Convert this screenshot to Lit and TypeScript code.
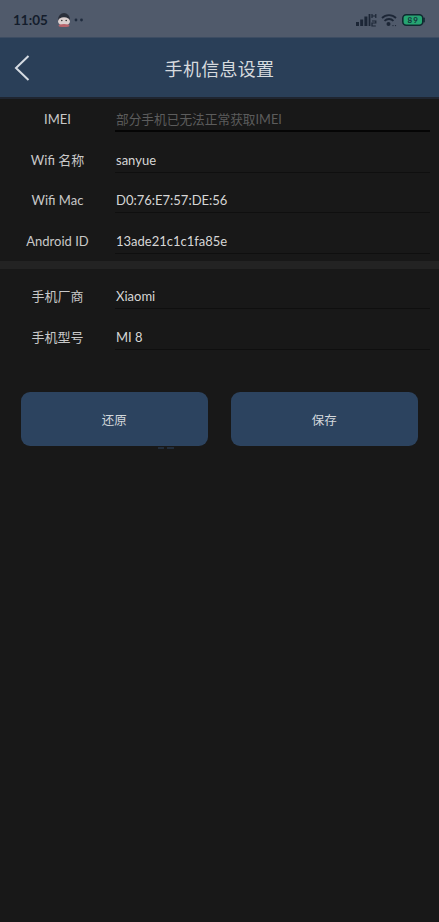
import { LitElement, html, css } from "lit";
import { customElement } from "lit/decorators.js";

const group1 = [
  { label: "IMEI", value: "部分手机已无法正常获取IMEI", hint: true },
  { label: "Wifi 名称", value: "sanyue" },
  { label: "Wifi Mac", value: "D0:76:E7:57:DE:56" },
  { label: "Android ID", value: "13ade21c1c1fa85e" },
];
const group2 = [
  { label: "手机厂商", value: "Xiaomi" },
  { label: "手机型号", value: "MI 8" },
];

@customElement("app-root")
export class AppRoot extends LitElement {
  static styles = css`
    :host {
      display: block;
      width: 439px;
      height: 922px;
      overflow: hidden;
      background: #181818;
      font-family: Lato, "Noto Sans CJK SC", sans-serif;
      color: #d2d2d2;
    }
    .status {
      height: 37px;
      box-sizing: border-box;
      background: #505a6b;
      display: flex;
      align-items: center;
      padding: 2px 14px 0 13px;
      color: #141d2b;
    }
    .time { font-size: 13.5px; font-weight: 700; margin-right: 8px; }
    .dots { margin-left: 2px; }
    .spacer { flex: 1; }
    .status-icons { display: flex; align-items: center; gap: 4px; }
    .battery-text {
      font-size: 8px; fill: #14323a; font-weight: 700; letter-spacing: 1px;
    }
    .header {
      height: 62px;
      box-sizing: border-box;
      background: #2a3f58;
      border-top: 1px solid #3c4c62;
      border-bottom: 2px solid #1f2530;
      display: flex;
      align-items: center;
      position: relative;
    }
    .back { margin-left: 14px; display: block; }
    .title {
      position: absolute;
      left: 0;
      right: 0;
      text-align: center;
      font-size: 18px;
      color: #d6dade;
      letter-spacing: 0.3px;
    }
    .row {
      display: flex;
      height: 40.5px;
      box-sizing: border-box;
      padding-right: 9px;
    }
    .label {
      width: 115px;
      text-align: center;
      font-size: 13px;
      line-height: 41px;
      color: #c8c8c8;
    }
    .value {
      flex: 1;
      font-size: 13px;
      line-height: 41px;
      height: 32px;
      padding-left: 1px;
      border-bottom: 1px solid #0f0f0f;
      color: #d6d6d6;
      white-space: nowrap;
    }
    .value.hint {
      color: #5c5c5c;
      font-size: 12.7px;
      border-bottom: 2px solid #050505;
      height: 31px;
    }
    .divider { height: 8px; background: #232323; }
    .group-b { padding-top: 6.5px; }
    .group-b .row { height: 41.5px; }
    .actions {
      display: flex;
      justify-content: space-between;
      padding: 0 21px 0 20.5px;
      margin-top: 33.5px;
    }
    .btn {
      width: 187.5px;
      height: 54px;
      border: none;
      padding: 0;
      border-radius: 9px;
      background: #2c435f;
      color: #d4d8dc;
      font: inherit;
      font-size: 12.5px;
    }
    .ghost {
      width: 18px;
      height: 4px;
      margin: 1px 0 0 157px;
      display: block;
    }
  `;

  private row(r: { label: string; value: string; hint?: boolean }) {
    return html`<div class="row">
      <div class="label">${r.label}</div>
      <div class="value ${r.hint ? "hint" : ""}">${r.value}</div>
    </div>`;
  }

  render() {
    return html`
      <div class="status">
        <span class="time">11:05</span>
        <svg width="16" height="16" viewBox="0 0 16 16">
          <ellipse cx="8" cy="7.5" rx="6" ry="6.5" fill="#2a2f3a" />
          <ellipse cx="8" cy="9.5" rx="6" ry="4.2" fill="#dcd0cf" />
          <ellipse cx="8" cy="13.5" rx="5.5" ry="1.6" fill="#b8636b" />
          <circle cx="5.8" cy="8.5" r="0.8" fill="#333" />
          <circle cx="10.2" cy="8.5" r="0.8" fill="#333" />
        </svg>
        <svg class="dots" width="10" height="4" viewBox="0 0 10 4">
          <circle cx="2" cy="2" r="1.4" fill="#1f2b3d" />
          <circle cx="7.5" cy="2" r="1.4" fill="#1f2b3d" />
        </svg>
        <span class="spacer"></span>
        <div class="status-icons">
          <svg width="21" height="14" viewBox="0 0 21 14">
            <rect x="0" y="9" width="3" height="4" fill="#1c2636" />
            <rect x="4.2" y="6.5" width="3" height="6.5" fill="#1c2636" />
            <rect x="8.4" y="3.5" width="3" height="9.5" fill="#1c2636" />
            <rect x="12.6" y="1" width="1.8" height="12" fill="#1c2636" />
            <path d="M16 1v4M19.8 1v4M16 3h3.8M16 8h3.8v2H16v3h3.8" stroke="#1c2636" stroke-width="1.2" fill="none" />
          </svg>
          <svg width="17" height="14" viewBox="0 0 17 14">
            <path d="M1 5a10 10 0 0 1 14 0M3.5 7.8a6.5 6.5 0 0 1 9 0" stroke="#1c2636" stroke-width="1.8" fill="none" />
            <circle cx="7.5" cy="11" r="2" fill="#1c2636" />
            <circle cx="12" cy="12.6" r="0.7" fill="#1c2636" />
            <circle cx="14.5" cy="12.6" r="0.7" fill="#1c2636" />
          </svg>
          <svg width="23" height="12" viewBox="0 0 23 12">
            <rect x="0.8" y="0.8" width="20" height="10.4" rx="3.5" fill="#26a572" stroke="#0f2a30" stroke-width="1.6" />
            <rect x="21.3" y="3.6" width="1.5" height="4.8" rx="0.7" fill="#0f2a30" />
            <text class="battery-text" x="5.5" y="9">89</text>
          </svg>
        </div>
      </div>
      <div class="header">
        <svg class="back" width="16" height="28" viewBox="0 0 16 28">
          <path d="M14.5 2 2 14l12.5 12" stroke="#d5dbe2" stroke-width="2" fill="none" />
        </svg>
        <div class="title">手机信息设置</div>
      </div>
      <div class="group-a">${group1.map((r) => this.row(r))}</div>
      <div class="divider"></div>
      <div class="group-b">${group2.map((r) => this.row(r))}</div>
      <div class="actions">
        <button class="btn">还原</button>
        <button class="btn">保存</button>
      </div>
      <svg class="ghost" viewBox="0 0 18 4">
        <path d="M1 1h6M10 1h7" stroke="#2c435f" stroke-width="1" />
      </svg>
    `;
  }
}
